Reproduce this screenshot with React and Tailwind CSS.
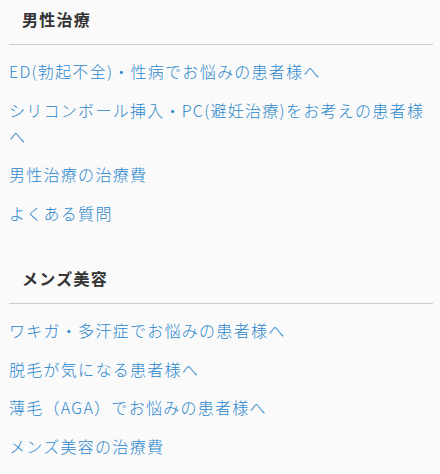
const sections = [
  {
    title: "男性治療",
    links: [
      "ED(勃起不全)・性病でお悩みの患者様へ",
      "シリコンボール挿入・PC(避妊治療)をお考えの患者様へ",
      "男性治療の治療費",
      "よくある質問",
    ],
  },
  {
    title: "メンズ美容",
    links: [
      "ワキガ・多汗症でお悩みの患者様へ",
      "脱毛が気になる患者様へ",
      "薄毛（AGA）でお悩みの患者様へ",
      "メンズ美容の治療費",
    ],
  },
]

export default function App() {
  return (
    <div
      className="min-h-[474px] w-[440px] bg-[#fafafa] pt-[6px] tracking-[0.08em] text-[16px]"
      style={{ fontFamily: '"Noto Sans CJK JP", "Noto Sans", sans-serif' }}
    >
      <div className="ml-[9px] w-[424px]">
        {sections.map((section, i) => (
          <section key={section.title} className={i > 0 ? "mt-[33px]" : ""}>
            <h3 className="border-b border-[#cccccc] pb-[12px] pl-[13px] font-bold leading-[26px] text-[#333333]">
              {section.title}
            </h3>
            <ul className="pt-[7px]">
              {section.links.map((link) => (
                <li key={link} className="py-[6.25px]">
                  <a href="#" className="font-light leading-[26px] text-[#2b87cc]">
                    {link}
                  </a>
                </li>
              ))}
            </ul>
          </section>
        ))}
      </div>
    </div>
  )
}
